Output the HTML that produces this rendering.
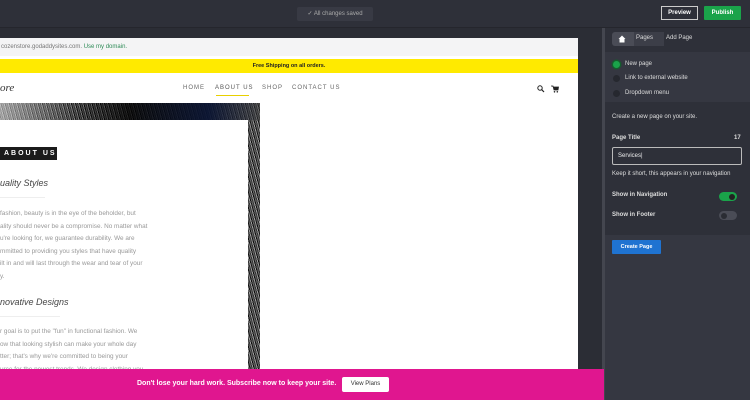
<!DOCTYPE html>
<html><head><meta charset="utf-8"><style>
*{margin:0;padding:0;box-sizing:border-box}
body{width:750px;height:400px;overflow:hidden;background:#2b2d35;font-family:"Liberation Sans",sans-serif;position:relative}
.top{position:absolute;left:0;top:0;width:750px;height:28px;background:#2e3039;border-bottom:1px solid #25262d}
.saved{position:absolute;left:297px;top:7px;width:76px;height:14px;background:#383a44;color:#aaa;font-size:6px;line-height:14px;text-align:center;border-radius:2px}
.prev{position:absolute;left:661px;top:6px;width:37px;height:14px;border:1px solid #ccc;color:#fff;font-size:6px;font-weight:bold;text-align:center;line-height:12px}
.pub{position:absolute;left:704px;top:6px;width:37px;height:14px;background:#1aa34a;color:#fff;font-size:6px;font-weight:bold;text-align:center;line-height:14px;border-radius:1px}
.site{position:absolute;left:0;top:38px;width:578px;height:362px;background:#fff;overflow:hidden}
.url{position:absolute;left:0;top:0;width:578px;height:18px;background:#f4f4f5;font-size:6px;color:#777;line-height:18px;padding-left:1px}
.url span{color:#2e8b57}
.yel{position:absolute;left:0;top:21px;width:578px;height:14px;background:#ffea00;font-size:5.5px;font-weight:bold;text-align:center;line-height:14px;color:#222}
.logo{position:absolute;left:0;top:44px;font-family:"Liberation Serif",serif;font-style:italic;font-size:11px;color:#333}
.nav{position:absolute;top:47px;font-size:6px;letter-spacing:1px;color:#666}
.hero{position:absolute;left:0;top:65px;width:260px;height:300px;background:
repeating-linear-gradient(75deg,#333 0 1px,#999 1px 2px,#111 2px 3px,#666 3px 4px),#111}
.hero:before{content:"";position:absolute;left:0;top:0;width:260px;height:17px;background:linear-gradient(90deg,rgba(220,220,220,.6),rgba(0,0,0,.2) 30%,rgba(0,0,0,.8) 50%,rgba(10,20,50,.95) 80%,rgba(60,60,60,.5))}
.card{position:absolute;left:0;top:82px;width:248px;height:290px;background:#fff}
.tag{position:absolute;left:0;top:27px;width:57px;height:13px;background:#1b1b1b;color:#fff;font-size:7px;letter-spacing:2px;line-height:13px;padding-left:4px;font-weight:bold}
.h{position:absolute;left:0;font-style:italic;font-size:9px;color:#444}
.line{position:absolute;left:0;height:1px;background:#eee}
.p{position:absolute;left:0;width:170px;font-size:6.4px;line-height:12.5px;color:#999;white-space:nowrap}
.pink{position:absolute;left:0;top:369px;width:604px;height:31px;background:#e0168f;color:#fff;font-size:7px;font-weight:bold}
.pink .t{position:absolute;left:137px;top:11px}
.vp{position:absolute;left:342px;top:8px;width:47px;height:15px;background:#fff;color:#333;font-size:6px;font-weight:normal;text-align:center;line-height:15px;border-radius:2px}
.panel{position:absolute;left:605px;top:28px;width:145px;height:372px;background:#2e3039;color:#eee;font-size:6px}
.sec{position:absolute;left:0;width:145px;background:#353741}
.lbl{position:absolute;font-size:6px;color:#ddd}
.rad{position:absolute;left:8px;width:7px;height:7px;border-radius:50%;background:#26282f}
.inp{position:absolute;left:7px;top:119px;width:130px;height:18px;border:1px solid #bbb;border-radius:2px;font-size:6px;line-height:16px;padding-left:5px;color:#eee}
.tog{position:absolute;left:114px;width:18px;height:9px;border-radius:5px}
.tog i{position:absolute;top:1.5px;width:6px;height:6px;border-radius:50%;background:#222}
</style></head><body>
<div class="top"><div class="saved">✓ All changes saved</div><div class="prev">Preview</div><div class="pub">Publish</div></div>
<div style="position:absolute;left:602px;top:28px;width:3px;height:372px;background:#44464f"></div>
<div class="site">
 <div class="url">cozenstore.godaddysites.com. <span>Use my domain.</span></div>
 <div class="yel">Free Shipping on all orders.</div>
 <div class="logo">ore</div>
 <div class="nav" style="left:183px">HOME</div>
 <div class="nav" style="left:215px;color:#555">ABOUT US</div>
 <div style="position:absolute;left:216px;top:57px;width:33px;height:1px;background:#e8d000"></div>
 <div class="nav" style="left:262px">SHOP</div>
 <div class="nav" style="left:292px">CONTACT US</div>
 <svg style="position:absolute;left:537px;top:47px" width="8" height="8"><circle cx="3" cy="3" r="2.2" fill="none" stroke="#222" stroke-width="1"/><line x1="4.6" y1="4.6" x2="7" y2="7" stroke="#222" stroke-width="1.2"/></svg>
 <svg style="position:absolute;left:551px;top:47px" width="8" height="8"><path d="M0 1H2L3 5H7L7.5 2H2.5" fill="#222" stroke="#222" stroke-width=".8"/><circle cx="3.5" cy="6.8" r=".8" fill="#222"/><circle cx="6.3" cy="6.8" r=".8" fill="#222"/></svg>
 <div class="hero"></div>
 <div class="card">
  <div class="tag">ABOUT US</div>
  <div class="h" style="top:58px">uality Styles</div>
  <div class="line" style="top:77px;width:45px"></div>
  <div class="p" style="top:88px">fashion, beauty is in the eye of the beholder, but<br>ality should never be a compromise. No matter what<br>u're looking for, we guarantee durability. We are<br>mmitted to providing you styles that have quality<br>ilt in and will last through the wear and tear of your<br>y.</div>
  <div class="h" style="top:177px">novative Designs</div>
  <div class="line" style="top:196px;width:60px"></div>
  <div class="p" style="top:206px">r goal is to put the "fun" in functional fashion. We<br>ow that looking stylish can make your whole day<br>tter; that's why we're committed to being your<br>urce for the newest trends. We design clothing you</div>
 </div>
</div>
<div class="pink"><div class="t">Don't lose your hard work. Subscribe now to keep your site.</div><div class="vp">View Plans</div></div>
<div class="panel">
 <div style="position:absolute;left:7px;top:4px;width:22px;height:14px;background:#4a4c56;border-radius:3px 0 0 3px"></div>
 <svg style="position:absolute;left:13px;top:7px" width="8" height="8"><path d="M4 0.5L0.5 4H1.5V7.5H6.5V4H7.5Z" fill="#fff"/></svg>
 <div style="position:absolute;left:29px;top:4px;width:30px;height:14px;background:#3c3e48"></div>
 <div class="lbl" style="left:31px;top:7px">Pages</div>
 <div class="lbl" style="left:61px;top:7px">Add Page</div>
 <div class="sec" style="top:24px;height:50px"></div>
 <div class="rad" style="top:33px;background:#1aa34a;box-shadow:0 0 0 1.5px #155c2d"></div>
 <div class="lbl" style="left:20px;top:33px">New page</div>
 <div class="rad" style="top:47px"></div>
 <div class="lbl" style="left:20px;top:47px">Link to external website</div>
 <div class="rad" style="top:62px"></div>
 <div class="lbl" style="left:20px;top:62px">Dropdown menu</div>
 <div class="lbl" style="left:7px;top:86px">Create a new page on your site.</div>
 <div class="lbl" style="left:7px;top:107px;font-weight:bold">Page Title</div>
 <div class="lbl" style="left:129px;top:107px;font-weight:bold">17</div>
 <div class="inp">Services|</div>
 <div class="lbl" style="left:7px;top:143px">Keep it short, this appears in your navigation</div>
 <div class="lbl" style="left:7px;top:164px;font-weight:bold">Show in Navigation</div>
 <div class="tog" style="top:164px;background:#1aa34a"><i style="left:10px"></i></div>
 <div class="lbl" style="left:7px;top:184px;font-weight:bold">Show in Footer</div>
 <div class="tog" style="top:183px;background:#4a4c56"><i style="left:2px;background:#2a2c33"></i></div>
 <div class="sec" style="top:207px;height:165px"></div>
 <div style="position:absolute;left:7px;top:212px;width:49px;height:14px;background:#1f73d1;color:#fff;font-size:5.5px;font-weight:bold;text-align:center;line-height:14px;border-radius:1px">Create Page</div>
</div>
</body></html>
